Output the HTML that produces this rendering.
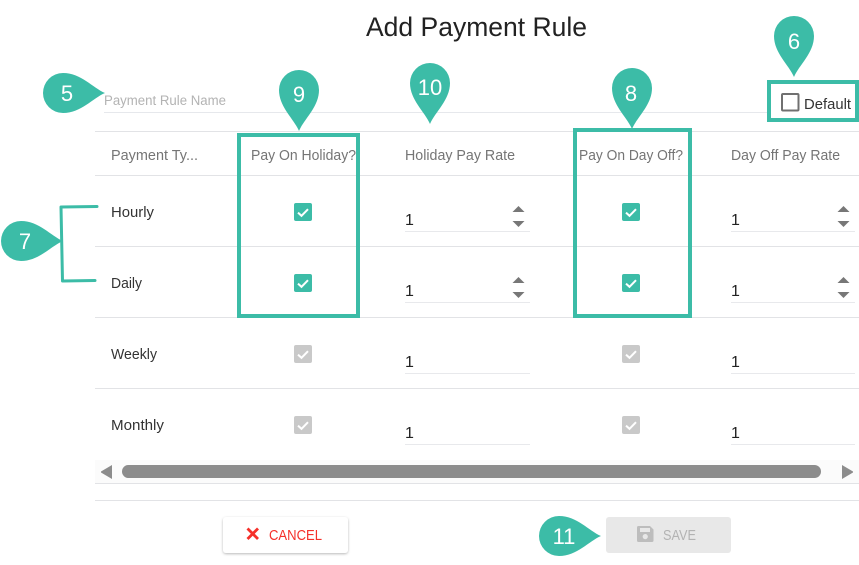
<!DOCTYPE html>
<html><head><meta charset="utf-8">
<style>
html,body{margin:0;padding:0;background:#fff;width:859px;height:565px;overflow:hidden}
svg{display:block}
text{font-family:"Liberation Sans",sans-serif}
.h{font-size:14.5px;fill:#757575}
.r{font-size:15px;fill:#333}
.n{font-size:16px;fill:#222}
.p{font-size:22px;fill:#fff;text-anchor:middle}
</style></head><body>
<svg width="859" height="565" viewBox="0 0 859 565" xmlns="http://www.w3.org/2000/svg">
<defs>
<filter id="s" x="-10%" y="-20%" width="120%" height="150%"><feDropShadow dx="0" dy="1" stdDeviation="1.2" flood-color="#000" flood-opacity=".28"/></filter>
<g id="cb"><rect width="18" height="18" rx="2"/><path d="M4 9.6L7.5 12.8L14 6.2" fill="none" stroke="#fff" stroke-width="2"/></g>
<path id="pv" d="M0 41C-5 29-20 17-20 0A20 20 0 0 1 20 0C20 17 5 29 0 41Z" fill="#3cbca7"/>
<path id="ph" d="M42 0C30-5 18-20 0-20A20 20 0 0 0 0 20C18 20 30 5 42 0Z" fill="#3cbca7"/>
<g id="sp" fill="#777"><path d="M-6 212H6L0 206Z"/><path d="M-6 221H6L0 227Z"/></g>
</defs>

<text x="366" y="36" font-size="27" fill="#222" textLength="221" lengthAdjust="spacingAndGlyphs">Add Payment Rule</text>

<text x="104" y="105" font-size="13.5" fill="#b3b3b3" textLength="122" lengthAdjust="spacingAndGlyphs">Payment Rule Name</text>
<rect x="104" y="112" width="664" height="1" fill="#e6e8ec"/>

<g fill="#e2e3e6">
<rect x="95" y="131" width="764" height="1"/>
<rect x="95" y="175" width="764" height="1"/>
<rect x="95" y="246" width="764" height="1"/>
<rect x="95" y="317" width="764" height="1"/>
<rect x="95" y="388" width="764" height="1"/>
<rect x="95" y="483" width="764" height="1"/>
<rect x="95" y="500" width="764" height="1"/>
</g>

<text class="h" x="111" y="160" textLength="87" lengthAdjust="spacingAndGlyphs">Payment Ty...</text>
<text class="h" x="251" y="160" textLength="105" lengthAdjust="spacingAndGlyphs">Pay On Holiday?</text>
<text class="h" x="405" y="160" textLength="110" lengthAdjust="spacingAndGlyphs">Holiday Pay Rate</text>
<text class="h" x="579" y="160" textLength="104" lengthAdjust="spacingAndGlyphs">Pay On Day Off?</text>
<text class="h" x="731" y="160" textLength="109" lengthAdjust="spacingAndGlyphs">Day Off Pay Rate</text>

<text class="r" x="111" y="217" textLength="43" lengthAdjust="spacingAndGlyphs">Hourly</text>
<text class="r" x="111" y="288" textLength="31" lengthAdjust="spacingAndGlyphs">Daily</text>
<text class="r" x="111" y="359" textLength="46" lengthAdjust="spacingAndGlyphs">Weekly</text>
<text class="r" x="111" y="430" textLength="53" lengthAdjust="spacingAndGlyphs">Monthly</text>

<use href="#cb" x="294" y="203" fill="#3cbca7"/>
<use href="#cb" x="294" y="274" fill="#3cbca7"/>
<use href="#cb" x="294" y="345" fill="#c9c9c9"/>
<use href="#cb" x="294" y="416" fill="#c9c9c9"/>
<use href="#cb" x="622" y="203" fill="#3cbca7"/>
<use href="#cb" x="622" y="274" fill="#3cbca7"/>
<use href="#cb" x="622" y="345" fill="#c9c9c9"/>
<use href="#cb" x="622" y="416" fill="#c9c9c9"/>

<g fill="#e8e9ec">
<rect x="405" y="231" width="125" height="1"/><rect x="405" y="302" width="125" height="1"/>
<rect x="405" y="373" width="125" height="1"/><rect x="405" y="444" width="125" height="1"/>
<rect x="731" y="231" width="124" height="1"/><rect x="731" y="302" width="124" height="1"/>
<rect x="731" y="373" width="124" height="1"/><rect x="731" y="444" width="124" height="1"/>
</g>
<text class="n" x="405" y="225">1</text><text class="n" x="405" y="296">1</text>
<text class="n" x="405" y="367">1</text><text class="n" x="405" y="438">1</text>
<text class="n" x="731" y="225">1</text><text class="n" x="731" y="296">1</text>
<text class="n" x="731" y="367">1</text><text class="n" x="731" y="438">1</text>

<use href="#sp" x="518.5" y="0"/><use href="#sp" x="518.5" y="71"/>
<use href="#sp" x="843.5" y="0"/><use href="#sp" x="843.5" y="71"/>

<rect x="95" y="460" width="764" height="23" fill="#fbfbfb"/>
<rect x="122" y="465" width="699" height="13" rx="6.5" fill="#8c8c8c"/>
<path d="M112 465V479L101 472.5V471.5Z" fill="#8c8c8c"/>
<path d="M842 465V479L853 472.5V471.5Z" fill="#8c8c8c"/>

<rect x="223" y="517" width="125" height="36" rx="3" fill="#fff" filter="url(#s)"/>
<path d="M247.5 528.5L258 539M258 528.5L247.5 539" stroke="#f5302a" stroke-width="2.8" fill="none"/>
<text x="269" y="540" font-size="14.5" fill="#f5302a" textLength="53" lengthAdjust="spacingAndGlyphs">CANCEL</text>

<rect x="606" y="517" width="125" height="36" rx="3" fill="#e8e8e8"/>
<path d="M638.5 526H650L653.5 529.5V540.5Q653.5 542 652 542H638.5Q637 542 637 540.5V527.5Q637 526 638.5 526ZM640 528V532H650V528ZM645.2 534A2.6 2.6 0 1 0 645.3 539.2A2.6 2.6 0 1 0 645.2 534Z" fill="#bdbdbd" fill-rule="evenodd"/>
<text x="663" y="540" font-size="14.5" fill="#b3b3b3" textLength="33" lengthAdjust="spacingAndGlyphs">SAVE</text>

<rect x="239" y="135" width="119" height="181" fill="none" stroke="#3cbca7" stroke-width="4"/>
<rect x="575" y="130" width="115" height="186" fill="none" stroke="#3cbca7" stroke-width="4"/>
<rect x="769" y="82" width="88" height="38" fill="none" stroke="#3cbca7" stroke-width="4"/>

<rect x="782" y="94" width="16.500" height="16.500" rx="1" fill="none" stroke="#707070" stroke-width="2"/>
<text x="804" y="109" font-size="14.5" fill="#333" textLength="47" lengthAdjust="spacingAndGlyphs">Default</text>

<path d="M97 206.5L61 207L62.500 281L95 280.500" fill="none" stroke="#3cbca7" stroke-width="3" stroke-linecap="round" stroke-linejoin="round"/>

<use href="#ph" x="63" y="93"/>
<use href="#pv" x="299" y="90"/>
<use href="#pv" x="430" y="83"/>
<use href="#pv" x="632" y="88"/>
<use href="#pv" x="794" y="36"/>
<use href="#ph" x="21" y="241"/>
<use href="#ph" x="559" y="536"/>

<text class="p" x="67" y="101">5</text>
<text class="p" x="299" y="102">9</text>
<text class="p" x="430" y="95">10</text>
<text class="p" x="631" y="101">8</text>
<text class="p" x="794" y="49">6</text>
<text class="p" x="25" y="249">7</text>
<text class="p" x="564" y="544">11</text>
</svg>
</body></html>
